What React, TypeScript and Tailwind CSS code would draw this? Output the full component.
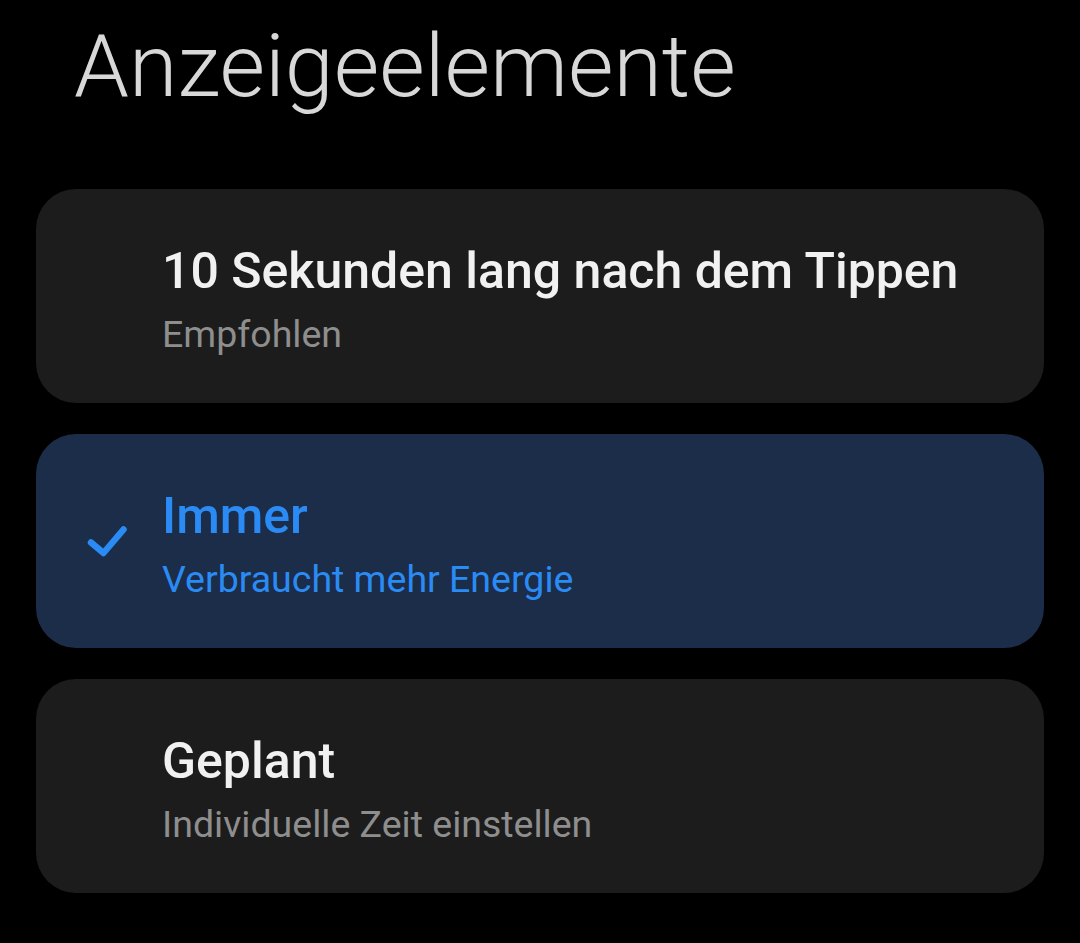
type Option = {
  title: string;
  subtitle: string;
  selected?: boolean;
};

const options: Option[] = [
  { title: "10 Sekunden lang nach dem Tippen", subtitle: "Empfohlen" },
  { title: "Immer", subtitle: "Verbraucht mehr Energie", selected: true },
  { title: "Geplant", subtitle: "Individuelle Zeit einstellen" },
];

function CheckMark() {
  return (
    <svg width="40" height="32" viewBox="0 0 40 32" fill="none">
      <path
        d="M4 17.5 L16.5 28 L36.5 4.5"
        stroke="#2b8bf4"
        strokeWidth="6.5"
        strokeLinecap="round"
        strokeLinejoin="round"
      />
    </svg>
  );
}

function OptionCard({ option }: { option: Option }) {
  const selected = !!option.selected;
  return (
    <div
      className={
        selected
          ? "flex h-[214px] items-center rounded-[40px] bg-[#1b2d49]"
          : "flex h-[214px] items-center rounded-[40px] bg-[#1c1c1c]"
      }
    >
      <div className="flex w-[126px] shrink-0 items-center pl-[51px]">{selected && <CheckMark />}</div>
      <div className="flex flex-col gap-[10px] pt-[6px]">
        <span
          className={
            selected
              ? "text-[50px] font-medium leading-[60px] text-[#2b8bf4]"
              : "text-[50px] font-medium leading-[60px] text-[#f1f1f1]"
          }
        >
          {option.title}
        </span>
        <span
          className={
            selected
              ? "text-[37.5px] leading-[46px] text-[#2b8bf4]"
              : "text-[37.5px] leading-[46px] text-[#8e8e8e]"
          }
        >
          {option.subtitle}
        </span>
      </div>
    </div>
  );
}

export default function App() {
  return (
    <div className="min-h-[943px] w-[1080px] bg-black font-['Roboto',sans-serif]">
      <h1 className="pl-[74px] pt-[11px] text-[88px] font-light leading-[110px] text-[#d8d8d8]">Anzeigeelemente</h1>
      <div className="mt-[68px] flex flex-col gap-[31px] px-[36px]">
        {options.map((o) => (
          <OptionCard key={o.title} option={o} />
        ))}
      </div>
    </div>
  );
}
